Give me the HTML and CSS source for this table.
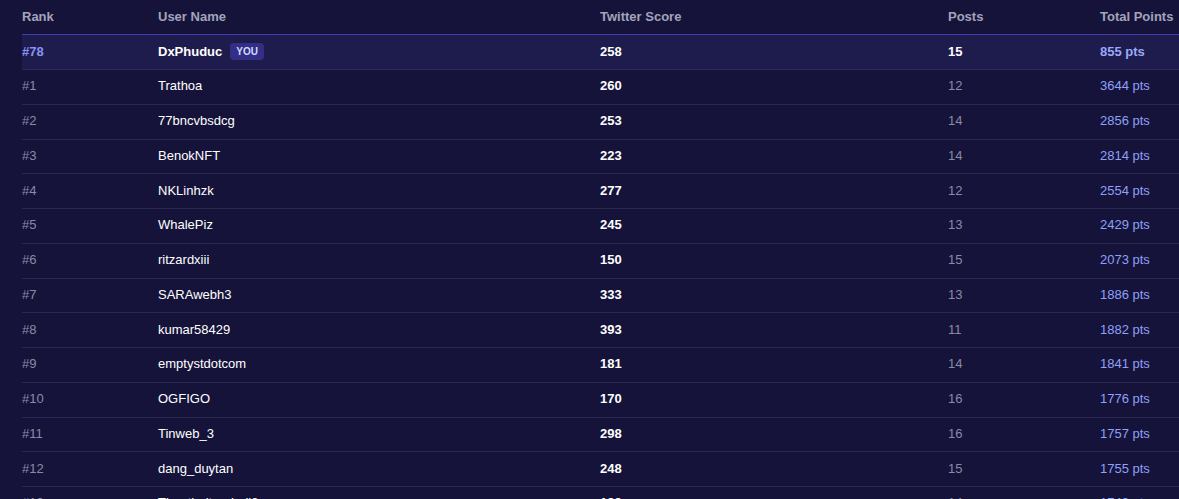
FILE: index.html
```html
<!DOCTYPE html>
<html>
<head>
<meta charset="utf-8">
<link rel="stylesheet" href="styles.css">
</head>
<body>
<div class="board">
  <div class="row head">
    <div>Rank</div><div>User Name</div><div>Twitter Score</div><div>Posts</div><div>Total Points</div>
  </div>
  <div class="row me">
    <div class="rank">#78</div>
    <div class="name">DxPhuduc <span class="badge">YOU</span></div>
    <div class="score">258</div>
    <div class="posts">15</div>
    <div class="pts">855 pts</div>
  </div>
  <div class="row"><div class="rank">#1</div><div class="name">Trathoa</div><div class="score">260</div><div class="posts">12</div><div class="pts">3644 pts</div></div>
  <div class="row"><div class="rank">#2</div><div class="name">77bncvbsdcg</div><div class="score">253</div><div class="posts">14</div><div class="pts">2856 pts</div></div>
  <div class="row"><div class="rank">#3</div><div class="name">BenokNFT</div><div class="score">223</div><div class="posts">14</div><div class="pts">2814 pts</div></div>
  <div class="row"><div class="rank">#4</div><div class="name">NKLinhzk</div><div class="score">277</div><div class="posts">12</div><div class="pts">2554 pts</div></div>
  <div class="row"><div class="rank">#5</div><div class="name">WhalePiz</div><div class="score">245</div><div class="posts">13</div><div class="pts">2429 pts</div></div>
  <div class="row"><div class="rank">#6</div><div class="name">ritzardxiii</div><div class="score">150</div><div class="posts">15</div><div class="pts">2073 pts</div></div>
  <div class="row"><div class="rank">#7</div><div class="name">SARAwebh3</div><div class="score">333</div><div class="posts">13</div><div class="pts">1886 pts</div></div>
  <div class="row"><div class="rank">#8</div><div class="name">kumar58429</div><div class="score">393</div><div class="posts">11</div><div class="pts">1882 pts</div></div>
  <div class="row"><div class="rank">#9</div><div class="name">emptystdotcom</div><div class="score">181</div><div class="posts">14</div><div class="pts">1841 pts</div></div>
  <div class="row"><div class="rank">#10</div><div class="name">OGFIGO</div><div class="score">170</div><div class="posts">16</div><div class="pts">1776 pts</div></div>
  <div class="row"><div class="rank">#11</div><div class="name">Tinweb_3</div><div class="score">298</div><div class="posts">16</div><div class="pts">1757 pts</div></div>
  <div class="row"><div class="rank">#12</div><div class="name">dang_duytan</div><div class="score">248</div><div class="posts">15</div><div class="pts">1755 pts</div></div>
  <div class="row"><div class="rank">#13</div><div class="name">Thanthaitranhall8</div><div class="score">199</div><div class="posts">14</div><div class="pts">1749 pts</div></div>
</div>
</body>
</html>
```
FILE: styles.css
```css
html, body {
  margin: 0;
  padding: 0;
  background: #15133a;
  overflow: hidden;
}
body {
  font-family: "Liberation Sans", Arial, sans-serif;
  font-size: 13px;
  color: #ffffff;
  width: 1179px;
  height: 499px;
}
.board {
  margin-left: 22px;
  width: 1300px;
}
.row {
  display: grid;
  grid-template-columns: 136px 442px 348px 152px 222px;
  align-items: center;
  height: 34.75px;
  box-sizing: border-box;
  padding-bottom: 2px;
  border-bottom: 1px solid #2a2851;
}
.row.head {
  height: 34px;
  border-bottom: none;
  font-weight: bold;
  color: #a3a3bb;
  padding-bottom: 2px;
}
.row.me {
  height: 36px;
  background: #1e1b4d;
  border-top: 1px solid #4239b0;
  border-bottom: 1px solid #2e2b5c;
  font-weight: bold;
}
.rank { color: #8b8aa6; }
.me .rank { color: #8a93f5; }
.name { display: flex; align-items: center; }
.score { font-weight: bold; }
.posts { color: #8b8aa6; }
.me .posts { color: #ffffff; }
.pts { color: #8ea0f7; }
.me .pts { color: #9ba8f8; }
.badge {
  display: inline-block;
  margin-left: 8px;
  background: #332f86;
  color: #d4d8ff;
  font-size: 10px;
  font-weight: bold;
  line-height: 17px;
  padding: 0 6px;
  border-radius: 4px;
}
```
